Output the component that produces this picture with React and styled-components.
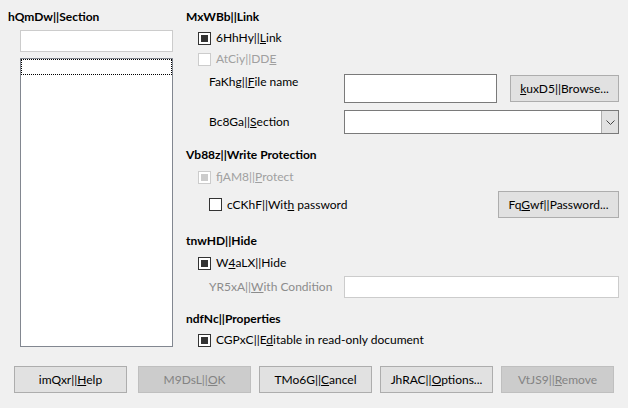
import React from 'react'
import styled, { createGlobalStyle } from 'styled-components'

const GlobalStyle = createGlobalStyle`
  html, body {
    margin: 0;
    padding: 0;
    background: #f0f0f0;
  }
  body {
    font-family: Lato, "Noto Sans", sans-serif;
    font-size: 12px;
    color: #000;
  }
`

const Dialog = styled.div`
  width: 628px;
  height: 408px;
  background: #f0f0f0;
  display: flex;
  flex-direction: column;
  box-sizing: border-box;
  overflow: hidden;
`

const Main = styled.div`
  display: flex;
  height: 366px;
`

const LeftColumn = styled.div`
  width: 178px;
  padding-left: 8px;
  display: flex;
  flex-direction: column;
`

const RightColumn = styled.div`
  flex: 1;
  padding-right: 9px;
  display: flex;
  flex-direction: column;
`

const Heading = styled.div`
  font-weight: 700;
  height: 22px;
  line-height: 22px;
  margin-top: ${p => p.$top || 0}px;
  white-space: nowrap;
`

const TextBox = styled.div`
  background: #fff;
  border: 1px solid ${p => (p.$dim ? '#cccccc' : '#7a7a7a')};
  box-sizing: border-box;
  height: ${p => p.$h || 22}px;
  width: ${p => (p.$w ? p.$w + 'px' : 'auto')};
  flex: ${p => (p.$w ? 'none' : 1)};
`

const NameInput = styled(TextBox)`
  margin: 2px 0 0 12px;
`

const ListBox = styled.div`
  margin: 6px 0 0 12px;
  width: 153px;
  height: 289px;
  box-sizing: border-box;
  border: 1px solid #828790;
  background: #fff;
`

const FocusRow = styled.div`
  height: 16px;
  border: 1px dotted #000;
  box-sizing: border-box;
`

const Row = styled.div`
  display: flex;
  align-items: ${p => p.$align || 'center'};
  height: ${p => p.$h}px;
  margin-top: ${p => p.$top || 0}px;
  padding-left: ${p => p.$indent || 0}px;
`

const CheckLabel = styled.label`
  display: flex;
  align-items: center;
  gap: 5px;
  color: ${p => (p.$disabled ? '#a0a0a0' : '#000')};
  white-space: nowrap;
  line-height: 16px;
`

const Box = styled.span`
  width: 13px;
  height: 13px;
  box-sizing: border-box;
  border: 1px solid ${p => (p.$disabled ? '#cccccc' : '#333333')};
  background: #fff;
  display: flex;
  align-items: center;
  justify-content: center;
  flex: none;
  &::after {
    content: '';
    display: ${p => (p.$checked ? 'block' : 'none')};
    width: 7px;
    height: 7px;
    background: ${p => (p.$disabled ? '#cccccc' : '#333333')};
  }
`

const FieldLabel = styled.span`
  width: 135px;
  flex: none;
  line-height: 16px;
  color: ${p => (p.$disabled ? '#8c8c8c' : '#000')};
  white-space: nowrap;
`

const Spacer = styled.div`
  flex: 1;
`

const Button = styled.button`
  font-family: inherit;
  font-size: 12px;
  height: 27px;
  width: ${p => p.$w || 113}px;
  flex: none;
  box-sizing: border-box;
  padding: 0;
  border: 1px solid ${p => (p.disabled ? '#bfbfbf' : '#adadad')};
  background: ${p => (p.disabled ? '#cccccc' : '#e1e1e1')};
  color: ${p => (p.disabled ? '#838383' : '#000')};
  margin-top: ${p => p.$top || 0}px;
  margin-left: ${p => p.$left || 0}px;
  white-space: nowrap;
`

const Combo = styled.div`
  flex: 1;
  height: 24px;
  box-sizing: border-box;
  border: 1px solid #7a7a7a;
  background: #fff;
  display: flex;
  justify-content: flex-end;
`

const ComboArrow = styled.div`
  width: 16px;
  background: #e1e1e1;
  border-left: 1px solid #adadad;
  display: flex;
  align-items: center;
  justify-content: center;
`

const Footer = styled.div`
  display: flex;
  padding-left: 14px;
`

function Check({ checked, disabled, children }) {
  return (
    <CheckLabel $disabled={disabled}>
      <Box $checked={checked} $disabled={disabled} />
      <span>{children}</span>
    </CheckLabel>
  )
}

export default function App() {
  return (
    <Dialog>
      <GlobalStyle />
      <Main>
        <LeftColumn>
          <Heading $top={6}>hQmDw||Section</Heading>
          <NameInput $dim $w={153} $h={22} />
          <ListBox>
            <FocusRow />
          </ListBox>
        </LeftColumn>

        <RightColumn>
          <Heading $top={6}>MxWBb||Link</Heading>
          <Row $h={20} $indent={12}>
            <Check checked>6HhHy||<u>L</u>ink</Check>
          </Row>
          <Row $h={22} $indent={12}>
            <Check disabled>AtCiy||DD<u>E</u></Check>
          </Row>
          <Row $h={29} $top={4} $indent={23} $align="flex-start">
            <FieldLabel>FaKhg||<u>F</u>ile name</FieldLabel>
            <TextBox $h={29} $w={153} />
            <Spacer />
            <Button $top={1} $w={109}><u>k</u>uxD5||Browse...</Button>
          </Row>
          <Row $h={24} $top={7} $indent={23}>
            <FieldLabel>Bc8Ga||<u>S</u>ection</FieldLabel>
            <Combo>
              <ComboArrow>
                <svg width="9" height="5" viewBox="0 0 9 5">
                  <path d="M0.5 0.5 L4.5 4.5 L8.5 0.5" fill="none" stroke="#444" strokeWidth="1" />
                </svg>
              </ComboArrow>
            </Combo>
          </Row>

          <Heading $top={10}>Vb88z||Write Protection</Heading>
          <Row $h={22} $indent={12}>
            <Check checked disabled>fjAM8||<u>P</u>rotect</Check>
          </Row>
          <Row $h={27} $top={3} $indent={23}>
            <Check>cCKhF||Wit<u>h</u> password</Check>
            <Spacer />
            <Button $w={121}>Fq<u>G</u>wf||Password...</Button>
          </Row>

          <Heading $top={12}>tnwHD||Hide</Heading>
          <Row $h={22} $indent={12}>
            <Check checked>W<u>4</u>aLX||Hide</Check>
          </Row>
          <Row $h={22} $top={2} $indent={23}>
            <FieldLabel $disabled>YR5xA||<u>W</u>ith Condition</FieldLabel>
            <TextBox $dim $h={22} />
          </Row>

          <Heading $top={10}>ndfNc||Properties</Heading>
          <Row $h={20} $indent={12}>
            <Check checked>CGPxC||E<u>d</u>itable in read-only document</Check>
          </Row>
        </RightColumn>
      </Main>

      <Footer>
        <Button>imQxr||<u>H</u>elp</Button>
        <Button $left={11} disabled>M9DsL||<u>O</u>K</Button>
        <Button $left={8}>TMo6G||<u>C</u>ancel</Button>
        <Button $left={8}>JhRAC||<u>O</u>ptions...</Button>
        <Button $left={8} disabled>VtJS9||<u>R</u>emove</Button>
      </Footer>
    </Dialog>
  )
}
